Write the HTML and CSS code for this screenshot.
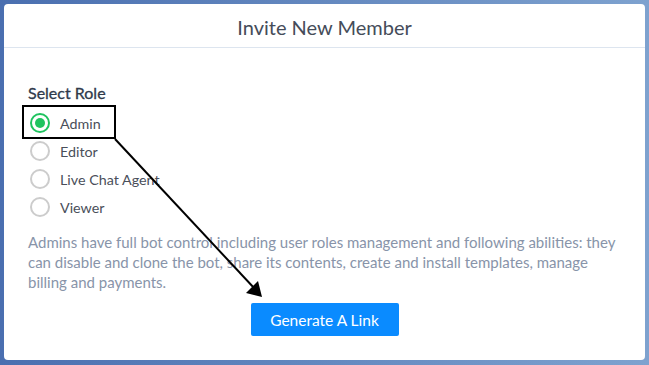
FILE: index.html
```html
<!DOCTYPE html>
<html lang="en">

<head>
    <meta charset="UTF-8">
    <meta name="viewport" content="width=device-width, initial-scale=1.0">
    <title>Invite New Member</title>
    <link rel="stylesheet" href="styles.css">
</head>

<body>

    <!--* Invite dialog -->
    <div class="modal">
        <div class="modal-header">Invite New Member</div>

        <div class="modal-body">
            <div class="role-title">Select Role</div>

            <div class="role-list">
                <label class="role-option">
                    <span class="radio checked"></span>
                    <span>Admin</span>
                </label>
                <label class="role-option">
                    <span class="radio"></span>
                    <span>Editor</span>
                </label>
                <label class="role-option">
                    <span class="radio"></span>
                    <span>Live Chat Agent</span>
                </label>
                <label class="role-option">
                    <span class="radio"></span>
                    <span>Viewer</span>
                </label>
            </div>

            <p class="role-description">Admins have full bot control including user roles management and following
                abilities: they can disable and clone the bot, share its contents, create and install templates,
                manage billing and payments.</p>

            <div class="actions">
                <button class="generate-button">Generate A Link</button>
            </div>
        </div>
    </div>

    <!--* annotation over the dialog -->
    <svg class="annotation" width="649" height="365" viewBox="0 0 649 365" xmlns="http://www.w3.org/2000/svg">
        <rect x="23" y="106" width="92" height="32" fill="none" stroke="#000" stroke-width="2" />
        <line x1="115" y1="139" x2="255" y2="289" stroke="#000" stroke-width="2" />
        <polygon points="262,297 246,293 258,281" fill="#000" />
    </svg>

</body>

</html>
```

FILE: styles.css
```css
body {
    margin: 0;
    padding: 4px;
    height: 365px;
    box-sizing: border-box;
    font-family: Lato, 'Open Sans', sans-serif;
    background: linear-gradient(to right, #4a6fb0, #7ea2cf);
    overflow: hidden;
}

.modal {
    background-color: white;
    border-radius: 4px;
    height: 356px;
    display: flex;
    flex-direction: column;
}

.modal-header {
    height: 43px;
    line-height: 46px;
    text-align: center;
    font-size: 20px;
    color: #454c59;
    border-bottom: 1px solid #dde5ef;
}

.modal-body {
    padding: 35px 24px 0 24px;
}

.role-title {
    font-size: 16px;
    line-height: 20px;
    color: #2f3a4b;
    -webkit-text-stroke: 0.3px #2f3a4b;
}

.role-list {
    display: flex;
    flex-direction: column;
    margin-top: 6px;
}

.role-option {
    display: flex;
    align-items: center;
    gap: 10px;
    height: 28px;
    padding-left: 2px;
    font-size: 14.3px;
    color: #4a4f5a;
}

.radio {
    width: 16px;
    height: 16px;
    border: 2px solid #cccccc;
    border-radius: 50%;
    display: flex;
    align-items: center;
    justify-content: center;
}

.radio.checked {
    border-color: #1fc35f;
}

.radio.checked::after {
    content: "";
    width: 10px;
    height: 10px;
    border-radius: 50%;
    background-color: #1fc35f;
}

.role-description {
    margin: 11px 0 0 0;
    font-size: 15px;
    line-height: 20px;
    color: #8894a9;
}

.actions {
    display: flex;
    justify-content: center;
    margin-top: 11px;
}

.generate-button {
    width: 148px;
    height: 33px;
    font-family: inherit;
    font-size: 15.5px;
    color: white;
    background-color: #0a8bff;
    border: none;
    border-radius: 2px;
}

.annotation {
    position: absolute;
    top: 0;
    left: 0;
    pointer-events: none;
}
```
